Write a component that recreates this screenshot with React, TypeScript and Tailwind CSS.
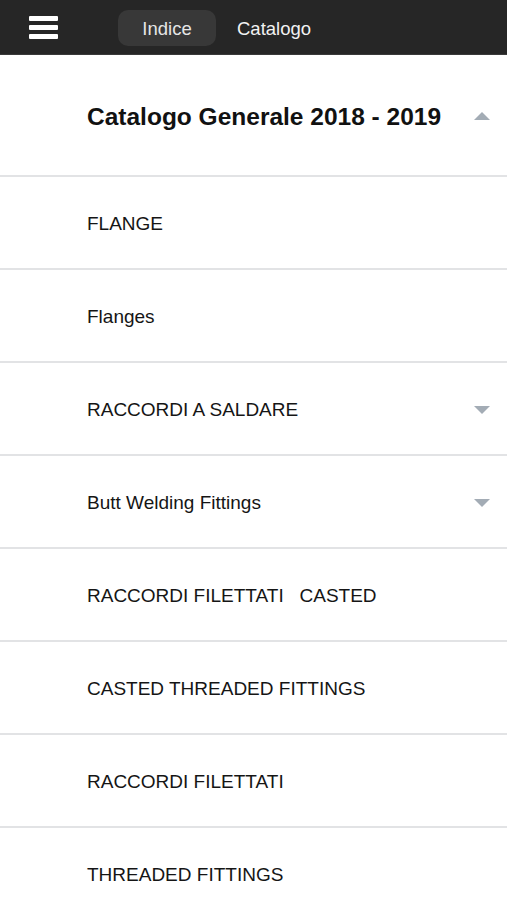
import React from "react";

const rows: { label: string; caret?: boolean }[] = [
  { label: "FLANGE" },
  { label: "Flanges" },
  { label: "RACCORDI A SALDARE", caret: true },
  { label: "Butt Welding Fittings", caret: true },
  { label: "RACCORDI FILETTATI\u00a0\u00a0\u00a0CASTED" },
  { label: "CASTED THREADED FITTINGS" },
  { label: "RACCORDI FILETTATI" },
  { label: "THREADED FITTINGS" },
];

export default function App() {
  return (
    <div
      className="w-[507px] h-[900px] overflow-hidden bg-white"
      style={{ fontFamily: '"Liberation Sans", Arial, sans-serif' }}
    >
      <header className="h-[55px] bg-[#262626] border-b border-[#3a3a3a] flex items-center">
        <div className="ml-[29px] w-[29px] flex flex-col gap-[4px]">
          <div className="h-[5px] bg-white rounded-[1px]" />
          <div className="h-[5px] bg-white rounded-[1px]" />
          <div className="h-[5px] bg-white rounded-[1px]" />
        </div>
        <div className="ml-[60px] mt-[2px] w-[98px] h-[36px] rounded-[10px] bg-[#383838] flex items-center justify-center text-[18.5px] text-[#e6e6e6] pt-[1px]">
          Indice
        </div>
        <div className="ml-[21px] mt-[3px] text-[18.5px] text-[#f2f2f2]">Catalogo</div>
      </header>
      <div className="h-[122px] flex items-center border-b-2 border-[#e2e3e5]">
        <div className="ml-[87px] pt-[5px] text-[24.5px] font-bold text-[#111]">
          Catalogo Generale 2018 - 2019
        </div>
        <svg className="ml-auto mr-[16px] mt-[1px]" width="18" height="10" viewBox="0 0 18 10">
          <path d="M1 9 L9 1 L17 9 Z" fill="#a3acb5" />
        </svg>
      </div>
      {rows.map((r, i) => (
        <div
          key={i}
          className="h-[93px] flex items-center border-b-2 border-[#e2e3e5]"
        >
          <div className="ml-[87px] pt-[3px] text-[19px] text-[#151515] whitespace-pre">{r.label}</div>
          {r.caret && (
            <svg className="ml-auto mr-[16px] mt-[3px]" width="18" height="10" viewBox="0 0 18 10">
              <path d="M1 1 L9 9 L17 1 Z" fill="#a3acb5" />
            </svg>
          )}
        </div>
      ))}
    </div>
  );
}
